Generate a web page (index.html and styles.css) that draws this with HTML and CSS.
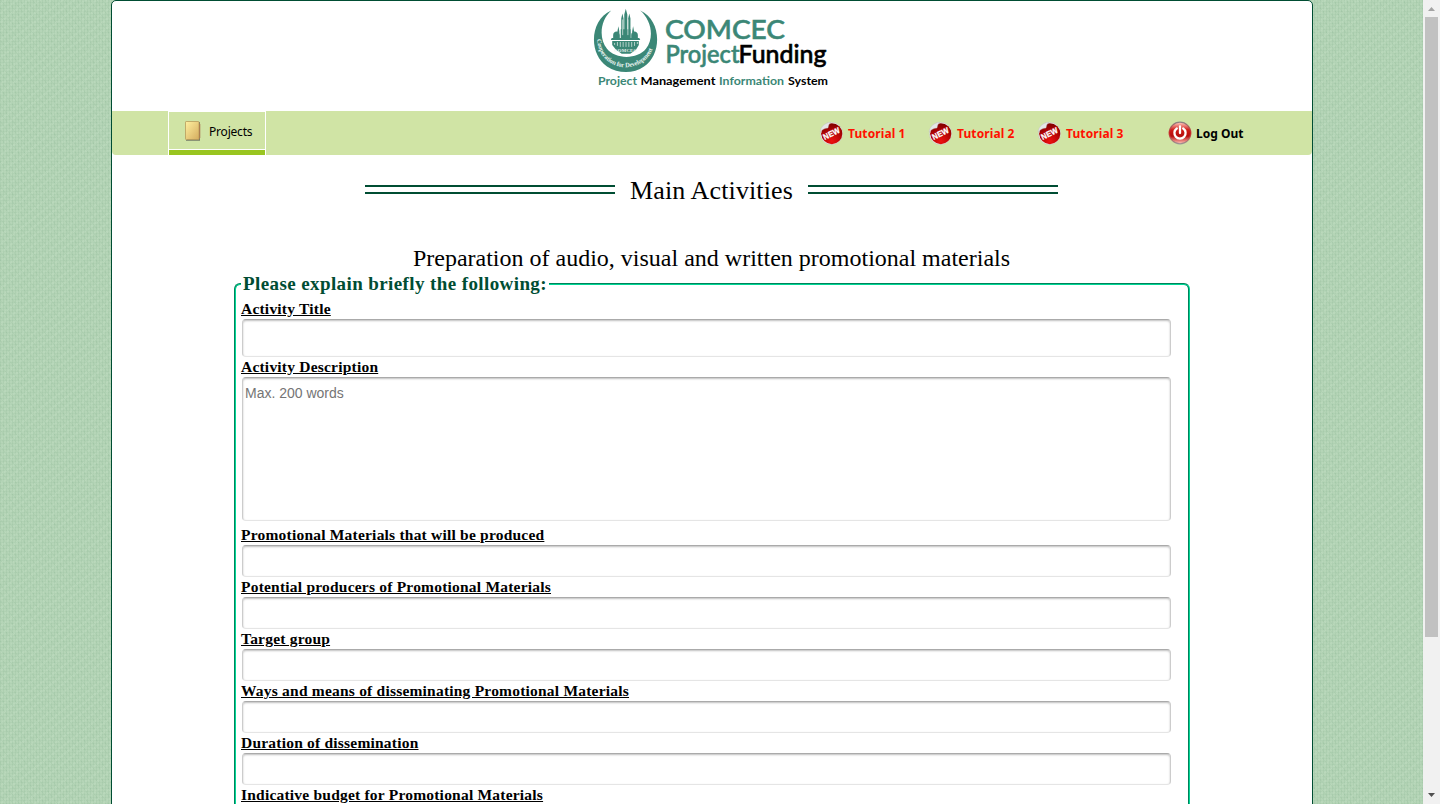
FILE: index.html
```html
<!DOCTYPE html>
<html lang="en">
<head>
<meta charset="utf-8">
<title>COMCEC Project Funding</title>
<link rel="stylesheet" href="styles.css">
</head>
<body>
<svg class="defs" width="0" height="0" aria-hidden="true">
  <defs>
    <radialGradient id="red" cx=".5" cy=".85" r=".8"><stop offset="0" stop-color="#ee1111"/><stop offset=".55" stop-color="#b80505"/><stop offset="1" stop-color="#850000"/></radialGradient>
    <linearGradient id="metal" x2="0" y2="1"><stop offset="0" stop-color="#888"/><stop offset=".5" stop-color="#c22"/><stop offset="1" stop-color="#999"/></linearGradient>
    <linearGradient id="power" x2="0" y2="1"><stop offset="0" stop-color="#ffc3b8"/><stop offset=".35" stop-color="#cf1b16"/><stop offset=".65" stop-color="#b60d0d"/><stop offset="1" stop-color="#ffbab0"/></linearGradient>
    <linearGradient id="fold" x2="1" y2="1"><stop offset="0" stop-color="#fff0a0"/><stop offset="1" stop-color="#d5ac5e"/></linearGradient>
    <symbol id="new" viewBox="0 0 24 24">
      <circle cx="12.500" cy="12.500" r="11.200" fill="#eef0e8" stroke="#b9bfae" stroke-width=".5"/>
      <circle cx="12.800" cy="12.700" r="10.500" fill="url(#red)"/>
      <path d="M1.200 11C1.500 6 6 1.600 12 1.300 9.500 3 9.500 5 9 7 6 7 3.500 8.500 1.200 11z" fill="#e6e6e6" stroke="#bbb" stroke-width=".4"/>
      <path d="M2 12.500 19.500 5l3 5L5 19z" fill="#b00606"/>
      <text x="12.200" y="15.500" text-anchor="middle" transform="rotate(-26 12 12)" textLength="17.500" lengthAdjust="spacingAndGlyphs" class="new-text">NEW</text>
    </symbol>
  </defs>
</svg>
<div class="viewport">
  <div class="page">
    <main class="sheet">
      <header class="header">
        <svg class="logo" width="240" height="86" viewBox="590 5 240 86">
          <defs><path id="motto" d="M595.500 37C596 78 655.500 78 656.500 37"/></defs>
          <g transform="translate(625.700 41) scale(.95 .98) translate(-625.700 -41)">
          <path d="M610.500 10C587 20 587 55 606 67c12 7.500 28 7.500 39 0 19-12 19-47-4-57 12 10 15 28 6 39-9 11-32 11-41 0-9-11-7-29 4.500-39z" fill="#3b8776"/>
          <g fill="#3b8776">
            <path d="M621 37v-19l1.200-5 1.200 5v19zM624.200 36V14l1.600-6 1.600 6v22zM628.300 37V18l1.200-5 1.200 5v19zM617 31l1-5 1 5v7h-2zM632.500 31l1-5 1 5v7h-2zM612.500 35c0-5 7-5 7 0v3h-7zM631.500 35c0-5 7-5 7 0v3h-7zM620.500 29h10.500v9h-10.500z"/>
            <path d="M611 38h29l1 2h-31zM611.500 41h28v4l-3 5-6 4h-9l-6-4-4-5z"/>
          </g>
          <path d="M614 43v2m3-3v4m3-4v5m3-5v5m3-5v5m3-5v5m3-5v5m3-5v4m3-4v2M622.500 19v16m5.500-16v16" fill="none" stroke="#d8e8e3" stroke-width=".8"/>
          <text class="motto"><textPath href="#motto" textLength="82" startOffset="2">Cooperation for Development</textPath></text>
          <text x="625.500" y="52" class="mini" text-anchor="middle" textLength="24">COMCEC</text>
          </g>
          <g class="brand">
            <text x="665" y="39" textLength="120" lengthAdjust="spacingAndGlyphs" class="green">COMCEC</text>
            <text x="665.500" y="63" textLength="74" lengthAdjust="spacingAndGlyphs" class="green second">Project</text>
            <text x="738.500" y="63" textLength="88" lengthAdjust="spacingAndGlyphs" class="second">Funding</text>
          </g>
          <g class="tag">
            <text x="598" y="84.500" textLength="39" lengthAdjust="spacingAndGlyphs" class="green">Project</text>
            <text x="640.500" y="84.500" textLength="75" lengthAdjust="spacingAndGlyphs">Management</text>
            <text x="719" y="84.500" textLength="65" lengthAdjust="spacingAndGlyphs" class="green">Information</text>
            <text x="788" y="84.500" textLength="40" lengthAdjust="spacingAndGlyphs">System</text>
          </g>
        </svg>
      </header>
      <nav class="nav">
        <a class="tab">
          <svg width="18" height="22" viewBox="0 0 18 22"><path d="M3 2h13v18H3z" fill="#7a7860"/><path d="M15.500 4v14" stroke="#a66b48" stroke-width="1.500"/><rect x="1.500" y="1.500" width="13.500" height="18" rx=".6" fill="url(#fold)" stroke="#b89c5c" stroke-width=".8"/><path d="M2 20.500h14" stroke="#8b9476"/></svg>
          <span>Projects</span>
        </a>
        <div class="links">
          <a class="link"><svg width="24" height="24"><use href="#new"/></svg><span>Tutorial 1</span></a>
          <a class="link"><svg width="24" height="24"><use href="#new"/></svg><span>Tutorial 2</span></a>
          <a class="link"><svg width="24" height="24"><use href="#new"/></svg><span>Tutorial 3</span></a>
          <a class="link logout">
            <svg width="24" height="24" viewBox="0 0 24 24"><circle cx="12" cy="12" r="11.400" fill="url(#metal)"/><circle cx="12" cy="12" r="10.200" fill="url(#power)"/><path d="M8.800 7.500a5.600 5.600 0 1 0 6.400 0M12 5.500v6.500" fill="none" stroke="#fff" stroke-width="2.300" stroke-linecap="round"/></svg>
            <span>Log Out</span>
          </a>
        </div>
      </nav>
      <div class="title"><i class="rule"></i><h1>Main Activities</h1><i class="rule"></i></div>
      <h2 class="subtitle"><span>Preparation of audio, visual and written promotional materials</span></h2>
      <fieldset class="form">
        <legend><span>Please explain briefly the following:</span></legend>
        <label for="f1">Activity Title</label><input id="f1" class="field tall">
        <label for="f2">Activity Description</label><textarea id="f2" class="field area" placeholder="Max. 200 words"></textarea>
        <label for="f3">Promotional Materials that will be produced</label><input id="f3" class="field">
        <label for="f4">Potential producers of Promotional Materials</label><input id="f4" class="field">
        <label for="f5">Target group</label><input id="f5" class="field">
        <label for="f6">Ways and means of disseminating Promotional Materials</label><input id="f6" class="field">
        <label for="f7">Duration of dissemination</label><input id="f7" class="field">
        <label for="f8">Indicative budget for Promotional Materials</label><input id="f8" class="field">
      </fieldset>
    </main>
  </div>
  <div class="scrollbar">
    <svg width="17" height="17"><path d="M5 11h7L8.500 7z" fill="#a3a3a3"/></svg>
    <div class="thumb"></div>
    <svg class="down" width="17" height="17"><path d="M5 6h7l-3.500 4z" fill="#505050"/></svg>
  </div>
</div>
</body>
</html>
```
FILE: styles.css
```css
* { box-sizing: border-box; }
body { margin: 0; overflow: hidden; font-family: "Liberation Serif", serif; color: #000; }
.defs { display: block; height: 0; }
.viewport { display: flex; height: 804px; overflow: hidden; }
.page {
  flex: 1;
  padding-left: 111px;
  background-color: #b5d5b7;
  background-image:
    repeating-linear-gradient(52deg, rgba(90,145,105,.06) 0 1px, transparent 1px 5px),
    repeating-linear-gradient(-38deg, rgba(215,238,215,.12) 0 2px, transparent 2px 7px),
    repeating-linear-gradient(90deg, rgba(90,145,105,.09) 0 1px, transparent 1px 3px),
    repeating-linear-gradient(0deg, rgba(90,145,105,.06) 0 1px, transparent 1px 3px);
}
.sheet { width: 1202px; height: 1100px; background: #fff; border: 1px solid #004d33; border-radius: 5px; }
.header { height: 110px; padding: 4px 0 0 478px; }
.logo { display: block; }
.green { fill: #3b8776; }
.brand { font: 500 26px Lato, sans-serif; stroke: #000; stroke-width: .6px; }
.brand .green { stroke: #3b8776; }
.brand .second { font-size: 25.500px; }
.tag { font: bold 12px Lato, sans-serif; }
.motto { font: bold 6.800px "Liberation Serif", serif; fill: #e8f2ef; }
.mini { font: bold 5px "Liberation Serif", serif; fill: #e8f2ef; }
.nav { display: flex; height: 44px; padding-left: 56px; background: #d0e4a5; border-radius: 0 0 4px 4px; }
.tab { display: flex; align-items: center; width: 98px; height: 44px; padding: 0 0 5px 15px; gap: 7px; border: 1px solid #fff; border-bottom: 0; background: linear-gradient(#d0e4a5 37px, #fff 37px 38px, #99c520 38px); font-family: "Noto Sans", sans-serif; font-size: 12px; letter-spacing: -.2px; }
.links { display: flex; align-items: center; margin-left: 553px; }
.link { display: flex; align-items: center; width: 109px; gap: 5px; color: #f10; font: bold 12px "Noto Sans", sans-serif; letter-spacing: .1px; white-space: nowrap; }
.link span { padding-top: 1px; }
.logout { margin-left: 22px; color: #000; gap: 4px; letter-spacing: 0; }
.new-text { font: bold 8px "Liberation Sans", sans-serif; fill: #fff; stroke: #fff; stroke-width: .3px; }
.title { display: flex; justify-content: center; align-items: center; height: 72px; padding-right: 1px; }
.title h1 { margin: 0; width: 193px; text-align: center; font-weight: normal; font-size: 26px; line-height: 30px; letter-spacing: .13px; }
.rule { width: 250px; height: 9px; margin-bottom: 3px; border: solid #004d33; border-width: 2px 0; }
.subtitle { display: flex; justify-content: center; height: 42px; margin: 0; padding: 16px 1px 0 0; font-weight: normal; font-size: 24px; line-height: 30px; white-space: nowrap; }
.form { width: 956px; height: 700px; margin: 5px 0 0 122px; padding: 0 0 0 5px; border: 2px groove #00d796; border-radius: 6px; display: flex; flex-direction: column; }
.form legend { height: 20px; margin-bottom: 5px; padding: 0 2px; color: #004d33; font-weight: bold; font-size: 19px; line-height: 20px; letter-spacing: .4px; white-space: nowrap; }
.form label { width: max-content; height: 20px; font-weight: bold; font-size: 15.500px; line-height: 20px; letter-spacing: .21px; text-decoration: underline; white-space: nowrap; }
.field { display: block; width: 929px; height: 32px; margin: 0 0 0 1px; padding: 2px; border: 1px solid; border-color: #aaa #ccc #e5e5e5; border-radius: 4px; background: #fff; box-shadow: inset 0 1px 2px rgba(0,0,0,.25); font: 14px "Liberation Sans", sans-serif; }
.tall { height: 38px; }
.area { height: 144px; margin-bottom: 4px; padding: 7px 2px; resize: none; }
.area::placeholder { color: #757575; }
.scrollbar { display: flex; flex-direction: column; width: 17px; background: #f1f1f1; }
.scrollbar svg { display: block; }
.thumb { width: 13px; height: 620px; margin-left: 2px; background: #c1c1c1; }
.down { margin-top: auto; }
```
